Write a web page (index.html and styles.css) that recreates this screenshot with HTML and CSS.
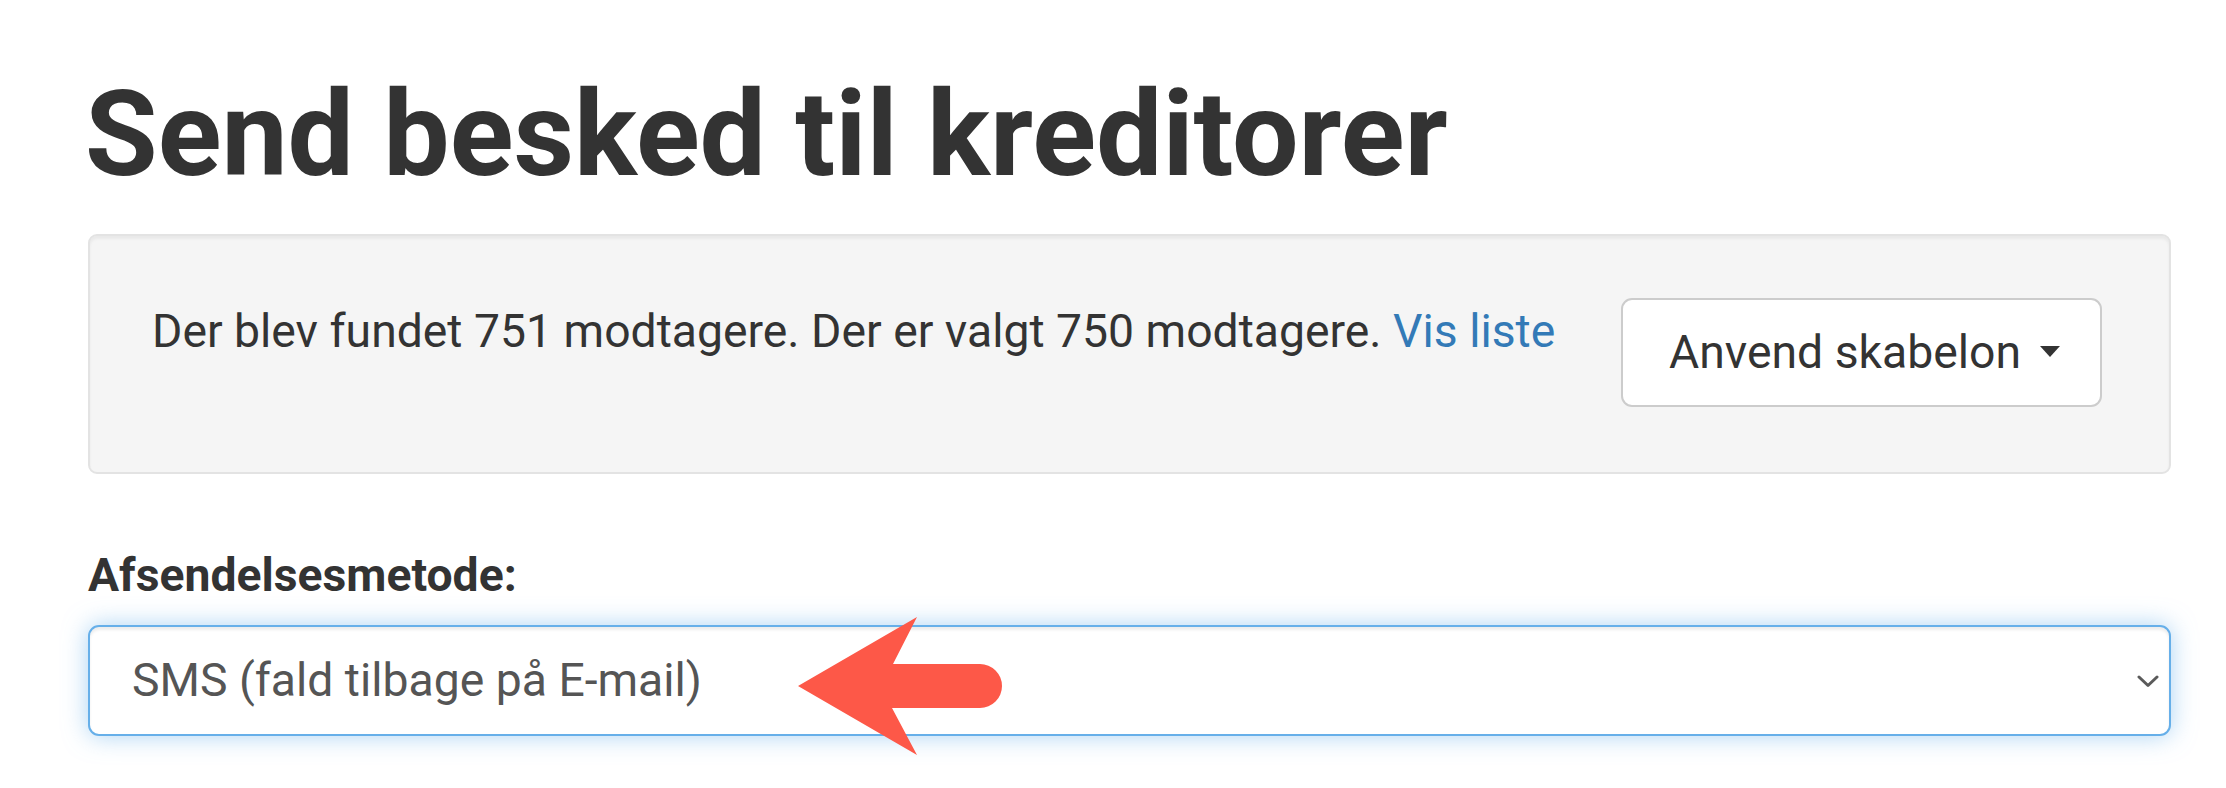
FILE: index.html
```html
<!DOCTYPE html>
<html lang="da">
<head>
<meta charset="utf-8">
<title>Send besked til kreditorer</title>
<link rel="stylesheet" href="styles.css">
</head>
<body>
<main class="page">
  <h1 class="page-title">Send besked til kreditorer</h1>

  <section class="well">
    <p class="well-text">Der blev fundet 751 modtagere. Der er valgt 750 modtagere. <a href="#" class="link">Vis liste</a></p>
    <button type="button" class="btn">Anvend skabelon <span class="caret"></span></button>
  </section>

  <div class="form-group">
    <label class="label" for="method">Afsendelsesmetode:</label>
    <div class="select-wrap">
      <select id="method" class="form-control">
        <option>SMS (fald tilbage på E-mail)</option>
        <option>E-mail</option>
        <option>SMS</option>
      </select>
      <svg class="chevron" viewBox="0 0 22 13" width="22" height="13" aria-hidden="true">
        <path d="M2 2 L11 10.5 L20 2" fill="none" stroke="#5a5a5a" stroke-width="3" stroke-linecap="round" stroke-linejoin="round"/>
      </svg>
      <svg class="pointer" viewBox="0 0 220 155" width="220" height="155" aria-hidden="true">
        <path d="M8 77 L127 8 L103 55 L190 55 A22 22 0 0 1 190 99 L102 99 L127 146 Z" fill="#fd5848"/>
      </svg>
    </div>
  </div>
</main>
</body>
</html>
```

FILE: styles.css
```css
html, body {
  margin: 0;
  padding: 0;
  background: #fff;
}

body {
  font-family: Roboto, "Helvetica Neue", Arial, sans-serif;
  font-size: 46.3px;
  line-height: 1.42857;
  color: #333;
}

.page {
  margin: 0 55px 0 88px;
  padding-bottom: 60px;
}

.page-title {
  margin: 71px 0 33px -3px;
  font-size: 118px;
  font-weight: 700;
  line-height: 1.1;
  color: #333;
}

/* grey info box */
.well {
  display: flex;
  justify-content: space-between;
  align-items: flex-start;
  padding: 62px 67px 65px 62px;
  background: #f5f5f5;
  border: 2px solid #e3e3e3;
  border-radius: 9px;
  box-shadow: inset 0 3px 3px rgba(0, 0, 0, 0.05);
}

.well-text {
  margin: 0;
}

.link {
  color: #337ab7;
  text-decoration: none;
}

.btn {
  display: inline-flex;
  align-items: center;
  height: 109px;
  padding: 0 40px 0 46px;
  font-family: inherit;
  font-size: 46.3px;
  line-height: 1.42857;
  color: #333;
  background: #fff;
  border: 2px solid #ccc;
  border-radius: 11px;
  cursor: pointer;
}

.caret {
  display: inline-block;
  width: 0;
  height: 0;
  margin-left: 19px;
  margin-top: -2px;
  border-top: 11px solid #333;
  border-left: 10.5px solid transparent;
  border-right: 10.5px solid transparent;
}

/* form */
.form-group {
  margin-top: 68px;
}

.label {
  display: inline-block;
  margin-bottom: 17px;
  font-weight: 700;
}

.select-wrap {
  position: relative;
}

.form-control {
  display: block;
  box-sizing: border-box;
  width: 100%;
  height: 111px;
  padding: 0 80px 0 42px;
  font-family: inherit;
  font-size: 46.3px;
  line-height: 1.42857;
  color: #555;
  background: #fff;
  border: 2px solid #66afe9;
  border-radius: 11px;
  outline: none;
  appearance: none;
  -webkit-appearance: none;
  box-shadow: inset 0 3px 3px rgba(0, 0, 0, 0.075), 0 0 24px rgba(102, 175, 233, 0.55);
}

.chevron {
  position: absolute;
  right: 12px;
  top: 50px;
  pointer-events: none;
}

.pointer {
  position: absolute;
  z-index: 1;
  left: 702px;
  top: -16px;
  overflow: visible;
  pointer-events: none;
}
```
